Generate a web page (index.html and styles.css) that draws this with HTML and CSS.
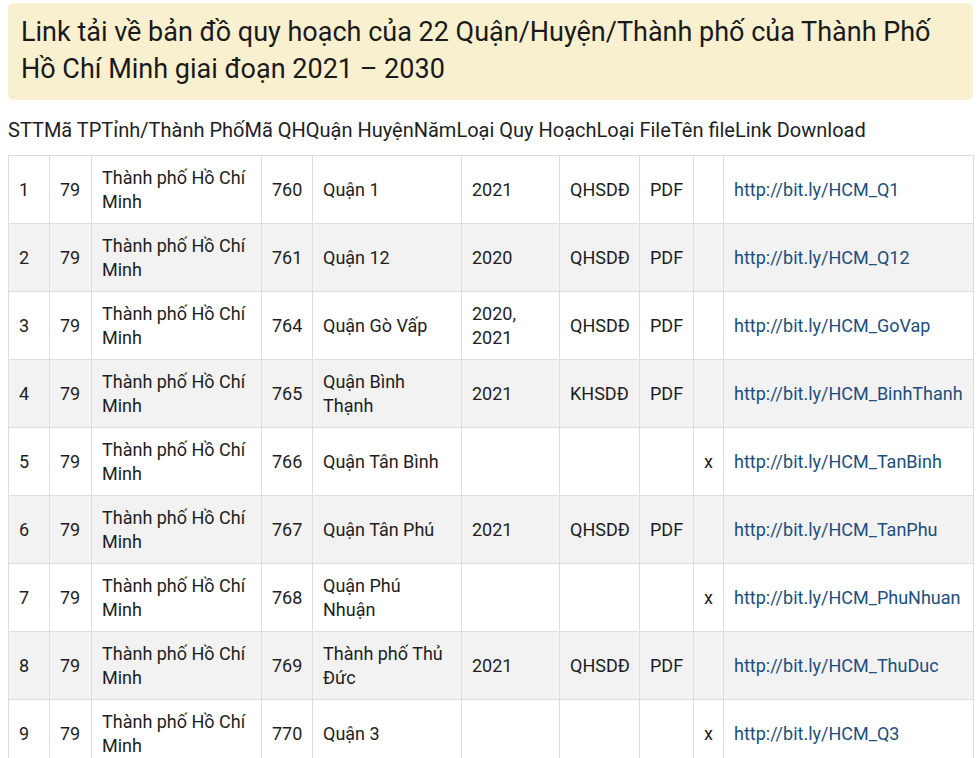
FILE: index.html
```html
<!DOCTYPE html>
<html lang="vi">
<head>
<meta charset="utf-8">
<link rel="stylesheet" href="styles.css">
</head>
<body>
<div class="page">
  <div class="notice">Link tải về bản đồ quy hoạch của 22 Quận/Huyện/Thành phố của Thành Phố Hồ Chí Minh giai đoạn 2021 – 2030</div>
  <div class="heads">STTMã TPTỉnh/Thành PhốMã QHQuận HuyệnNămLoại Quy HoạchLoại FileTên fileLink Download</div>
  <table class="grid">
    <colgroup>
      <col class="c1"><col class="c2"><col class="c3"><col class="c4"><col class="c5"><col class="c6"><col class="c7"><col class="c8"><col class="c9"><col class="c10">
    </colgroup>
    <tbody>
      <tr><td>1</td><td>79</td><td>Thành phố Hồ Chí Minh</td><td>760</td><td>Quận 1</td><td>2021</td><td>QHSDĐ</td><td>PDF</td><td></td><td><a href="#">http://bit.ly/HCM_Q1</a></td></tr>
      <tr><td>2</td><td>79</td><td>Thành phố Hồ Chí Minh</td><td>761</td><td>Quận 12</td><td>2020</td><td>QHSDĐ</td><td>PDF</td><td></td><td><a href="#">http://bit.ly/HCM_Q12</a></td></tr>
      <tr><td>3</td><td>79</td><td>Thành phố Hồ Chí Minh</td><td>764</td><td>Quận Gò Vấp</td><td>2020, 2021</td><td>QHSDĐ</td><td>PDF</td><td></td><td><a href="#">http://bit.ly/HCM_GoVap</a></td></tr>
      <tr><td>4</td><td>79</td><td>Thành phố Hồ Chí Minh</td><td>765</td><td>Quận Bình Thạnh</td><td>2021</td><td>KHSDĐ</td><td>PDF</td><td></td><td><a href="#">http://bit.ly/HCM_BinhThanh</a></td></tr>
      <tr><td>5</td><td>79</td><td>Thành phố Hồ Chí Minh</td><td>766</td><td>Quận Tân Bình</td><td></td><td></td><td></td><td>x</td><td><a href="#">http://bit.ly/HCM_TanBinh</a></td></tr>
      <tr><td>6</td><td>79</td><td>Thành phố Hồ Chí Minh</td><td>767</td><td>Quận Tân Phú</td><td>2021</td><td>QHSDĐ</td><td>PDF</td><td></td><td><a href="#">http://bit.ly/HCM_TanPhu</a></td></tr>
      <tr><td>7</td><td>79</td><td>Thành phố Hồ Chí Minh</td><td>768</td><td>Quận Phú Nhuận</td><td></td><td></td><td></td><td>x</td><td><a href="#">http://bit.ly/HCM_PhuNhuan</a></td></tr>
      <tr><td>8</td><td>79</td><td>Thành phố Hồ Chí Minh</td><td>769</td><td>Thành phố Thủ Đức</td><td>2021</td><td>QHSDĐ</td><td>PDF</td><td></td><td><a href="#">http://bit.ly/HCM_ThuDuc</a></td></tr>
      <tr><td>9</td><td>79</td><td>Thành phố Hồ Chí Minh</td><td>770</td><td>Quận 3</td><td></td><td></td><td></td><td>x</td><td><a href="#">http://bit.ly/HCM_Q3</a></td></tr>
    </tbody>
  </table>
</div>
</body>
</html>
```

FILE: styles.css
```css
html, body {
  margin: 0;
  padding: 0;
  background: #ffffff;
}

body {
  font-family: Roboto, "Noto Sans", sans-serif;
  color: #1e1e1e;
}

.page {
  width: 965px;
  padding: 3px 0 0 8px;
}

.notice {
  background: #f9f0cf;
  border-radius: 6px;
  padding: 11px 13px 12px 13px;
  font-size: 27px;
  line-height: 37px;
  color: #1a1a1a;
}

.heads {
  font-size: 20px;
  line-height: 24px;
  margin: 18px 0 13px 0;
  white-space: nowrap;
}

.grid {
  width: 965px;
  border-collapse: collapse;
  table-layout: fixed;
  font-size: 18px;
  line-height: 23.5px;
}

.grid td {
  border: 1px solid #dddddd;
  padding: 10px 10px;
  height: 47px;
  vertical-align: middle;
}

.grid tr:nth-child(even) td {
  background: #f2f2f2;
}

.grid a {
  color: #1d4f7c;
  text-decoration: none;
  white-space: nowrap;
}

.c1 { width: 41px; }
.c2 { width: 42px; }
.c3 { width: 170px; }
.c4 { width: 51px; }
.c5 { width: 149px; }
.c6 { width: 98px; }
.c7 { width: 80px; }
.c8 { width: 54px; }
.c9 { width: 30px; }
.c10 { width: 250px; }
```
